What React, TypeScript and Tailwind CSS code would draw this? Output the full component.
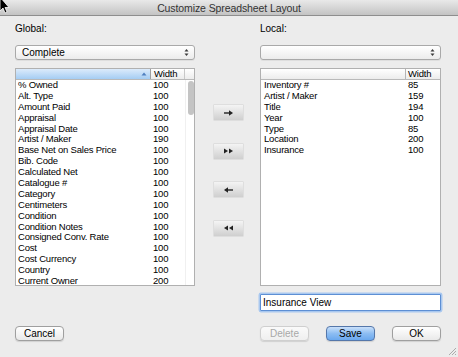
import React from 'react';

const globalRows: [string, number][] = [
  ['% Owned', 100],
  ['Alt. Type', 100],
  ['Amount Paid', 100],
  ['Appraisal', 100],
  ['Appraisal Date', 100],
  ['Artist / Maker', 190],
  ['Base Net on Sales Price', 100],
  ['Bib. Code', 100],
  ['Calculated Net', 100],
  ['Catalogue #', 100],
  ['Category', 100],
  ['Centimeters', 100],
  ['Condition', 100],
  ['Condition Notes', 100],
  ['Consigned Conv. Rate', 100],
  ['Cost', 100],
  ['Cost Currency', 100],
  ['Country', 100],
  ['Current Owner', 200],
];

const localRows: [string, number][] = [
  ['Inventory #', 85],
  ['Artist / Maker', 159],
  ['Title', 194],
  ['Year', 100],
  ['Type', 85],
  ['Location', 200],
  ['Insurance', 100],
];

function PopupArrows() {
  return (
    <svg width="5" height="9" viewBox="0 0 5 9" className="shrink-0">
      <path d="M0.5 3.5 L2.5 1 L4.5 3.5 Z" fill="#3a3a3a" />
      <path d="M0.5 5.5 L2.5 8 L4.5 5.5 Z" fill="#3a3a3a" />
    </svg>
  );
}

function Popup({ value }: { value: string }) {
  return (
    <div className="h-[15px] rounded-[3px] border border-[#a9a9a9] bg-gradient-to-b from-[#ffffff] to-[#ececec] shadow-[0_1px_0_rgba(0,0,0,0.06)] flex items-center justify-between pl-[6px] pr-[5px]">
      <span className="text-[10px] leading-[12px] text-black">{value}</span>
      <PopupArrows />
    </div>
  );
}

function MoveButton({ kind }: { kind: 'one' | 'all' | 'back' | 'backAll' }) {
  return (
    <div className="w-[29px] h-[15px] bg-gradient-to-b from-[#f4f4f4] to-[#cfcfcf] shadow-[0_0_0_0.5px_#d0d0d0] flex items-center justify-center">
      <svg width="11" height="6" viewBox="0 0 11 6">
        {kind === 'one' && (
          <>
            <rect x="1" y="2.3" width="6" height="1.4" fill="#222" />
            <path d="M6 0.3 L10 3 L6 5.7 Z" fill="#222" />
          </>
        )}
        {kind === 'back' && (
          <>
            <rect x="4" y="2.3" width="6" height="1.4" fill="#222" />
            <path d="M5 0.3 L1 3 L5 5.7 Z" fill="#222" />
          </>
        )}
        {kind === 'all' && (
          <>
            <path d="M1 0.5 L5 3 L1 5.5 Z" fill="#222" />
            <path d="M6 0.5 L10 3 L6 5.5 Z" fill="#222" />
          </>
        )}
        {kind === 'backAll' && (
          <>
            <path d="M5 0.5 L1 3 L5 5.5 Z" fill="#222" />
            <path d="M10 0.5 L6 3 L10 5.5 Z" fill="#222" />
          </>
        )}
      </svg>
    </div>
  );
}

function PushButton({ label, variant = 'plain' }: { label: string; variant?: 'plain' | 'default' | 'disabled' }) {
  const look =
    variant === 'default'
      ? 'border-[#5577aa] bg-gradient-to-b from-[#c9e0fa] via-[#8dbdf2] to-[#6aa8ee] text-black'
      : variant === 'disabled'
      ? 'border-[#cfcfcf] bg-gradient-to-b from-[#fafafa] to-[#efefef] text-[#a8a8a8]'
      : 'border-[#9f9f9f] bg-gradient-to-b from-[#ffffff] to-[#e9e9e9] text-black';
  return (
    <div
      className={`w-[49px] h-[15px] rounded-[4px] border shadow-[0_1px_1px_rgba(0,0,0,0.12)] flex items-center justify-center text-[10px] leading-[12px] ${look}`}
    >
      {label}
    </div>
  );
}

export default function App() {
  return (
    <div className="relative w-[458px] h-[357px] overflow-hidden bg-[#ececec] font-['Liberation_Sans',Arial,sans-serif] select-none">
      {/* title bar */}
      <div className="h-[16px] border-b border-[#8e8e8e] bg-gradient-to-b from-[#e9e9e9] to-[#c3c3c3] flex items-center justify-center">
        <span className="text-[10.5px] leading-[12px] text-[#333] tracking-[-0.1px]">Customize Spreadsheet Layout</span>
      </div>

      <div className="flex pl-[15px] pr-[17px] pt-[7px]">
        {/* global column */}
        <div className="w-[180px] flex flex-col">
          <div className="text-[10px] leading-[12px] text-black">Global:</div>
          <div className="mt-[10px]">
            <Popup value="Complete" />
          </div>
          <div className="mt-[8px] h-[218px] border border-[#b0b0b0] bg-white flex flex-col overflow-hidden">
            <div className="h-[11px] shrink-0 flex border-b border-[#b9b9b9] text-[9.5px] leading-[10px] tracking-[-0.2px]">
              <div className="w-[135px] bg-gradient-to-b from-[#dcebfb] to-[#a5cdf3] flex items-center justify-end pr-[3px] border-r border-[#a0a0a0]">
                <svg width="6" height="4" viewBox="0 0 6 4">
                  <path d="M0.5 3.5 L3 0.5 L5.5 3.5 Z" fill="#4f7fbf" />
                </svg>
              </div>
              <div className="w-[34px] bg-gradient-to-b from-[#ffffff] to-[#ececec] pl-[3px] border-r border-[#c8c8c8] text-black">Width</div>
              <div className="flex-1 bg-gradient-to-b from-[#ffffff] to-[#ececec]" />
            </div>
            <div className="flex flex-1 min-h-0">
              <div className="flex-1 text-[9.5px] tracking-[-0.2px] text-black">
                {globalRows.map(([name, w]) => (
                  <div key={name} className="flex h-[10.9px] leading-[10.9px] whitespace-nowrap">
                    <span className="w-[137px] pl-[2px]">{name}</span>
                    <span>{w}</span>
                  </div>
                ))}
              </div>
              <div className="w-[9px] border-l border-[#f0f0f0] bg-white pt-[1px] pl-[1.5px]">
                <div className="w-[6px] h-[34px] rounded-full bg-[#c4c4c4]" />
              </div>
            </div>
          </div>
          <div className="mt-[40px]">
            <PushButton label="Cancel" />
          </div>
        </div>

        {/* move buttons */}
        <div className="w-[65px] flex flex-col items-center pt-[82px] gap-[23.5px] pl-[2px]">
          <MoveButton kind="one" />
          <MoveButton kind="all" />
          <MoveButton kind="back" />
          <MoveButton kind="backAll" />
        </div>

        {/* local column */}
        <div className="flex-1 flex flex-col">
          <div className="text-[10px] leading-[12px] text-black">Local:</div>
          <div className="mt-[10px]">
            <Popup value="" />
          </div>
          <div className="mt-[8px] h-[218px] border border-[#b0b0b0] bg-white flex flex-col overflow-hidden">
            <div className="h-[11px] shrink-0 flex border-b border-[#b9b9b9] bg-gradient-to-b from-[#ffffff] to-[#ececec] text-[9.5px] leading-[10px] tracking-[-0.2px] text-black">
              <div className="w-[145px] border-r border-[#b5b5b5]" />
              <div className="flex-1 pl-[2px]">Width</div>
            </div>
            <div className="text-[9.5px] tracking-[-0.2px] text-black">
              {localRows.map(([name, w]) => (
                <div key={name} className="flex h-[10.9px] leading-[10.9px] whitespace-nowrap">
                  <span className="w-[147px] pl-[3px]">{name}</span>
                  <span>{w}</span>
                </div>
              ))}
            </div>
          </div>
          <div className="mt-[8px] h-[17px] border border-[#5d8fd4] rounded-[1px] bg-white shadow-[0_0_0_1.5px_#a9c8ef] flex items-center pl-[2px]">
            <span className="text-[10px] leading-[12px] text-black">Insurance View</span>
          </div>
          <div className="mt-[15px] flex justify-between">
            <PushButton label="Delete" variant="disabled" />
            <PushButton label="Save" variant="default" />
            <PushButton label="OK" />
          </div>
        </div>
      </div>

      {/* resize grip */}
      <svg className="absolute right-[1px] bottom-[1px]" width="10" height="10" viewBox="0 0 10 10">
        <path d="M9 2 L2 9 M9 5 L5 9 M9 8 L8 9" stroke="#9a9a9a" strokeWidth="0.8" />
      </svg>

      {/* mouse pointer */}
      <svg className="absolute left-0 top-0" width="10" height="15" viewBox="0 0 10 15">
        <path d="M0 -3 L0 11 L3 8 L5 13 L7 12 L5 7.5 L9 7.5 Z" fill="#000" stroke="#fff" strokeWidth="0.8" />
      </svg>
    </div>
  );
}
